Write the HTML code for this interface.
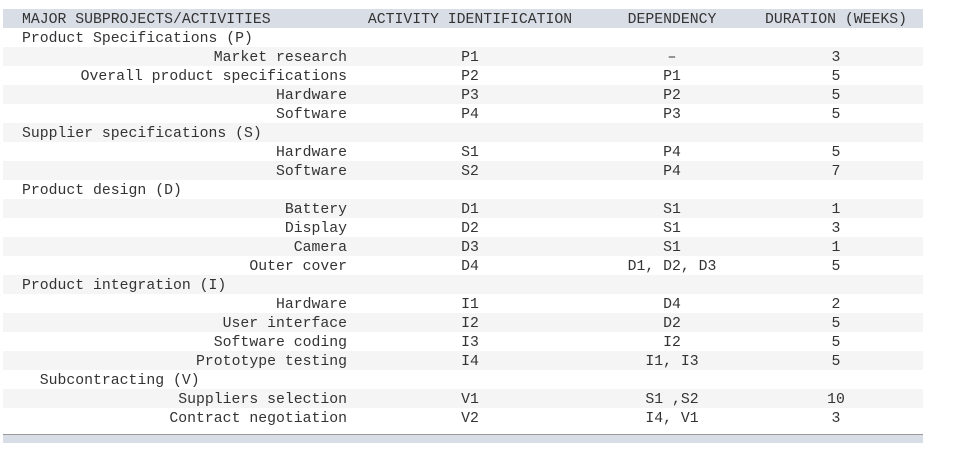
<!DOCTYPE html>
<html><head><style>
body{margin:0;background:#fff;font-family:"Liberation Mono",monospace;font-size:14.8px;color:#333;}
.t{position:absolute;left:3px;top:9px;width:920px;}
.r{display:flex;height:19px;line-height:19px;white-space:pre;box-sizing:border-box;padding-top:2px;}
.r:nth-child(odd){background:#f5f5f5}
.r.h{background:#d9dde6;color:#333}
.c1{width:344px;padding-right:10px;text-align:right}
.c1.l{text-align:left;padding-left:19px;width:335px;padding-right:0}
.c2{width:226px;text-align:center}
.c3{width:178px;text-align:center}
.c4{width:150px;text-align:center}
.bot{position:absolute;left:3px;top:434px;width:920px;height:9px;background:#d9dde6;border-top:1px solid #999;box-sizing:border-box}
</style></head><body>
<div class="t">
<div class="r h"><div class="c1 l">MAJOR SUBPROJECTS/ACTIVITIES</div><div class="c2">ACTIVITY IDENTIFICATION</div><div class="c3">DEPENDENCY</div><div class="c4">DURATION (WEEKS)</div></div>
<div class="r"><div class="c1 l">Product Specifications (P)</div></div>
<div class="r"><div class="c1">Market research</div><div class="c2">P1</div><div class="c3">–</div><div class="c4">3</div></div>
<div class="r"><div class="c1">Overall product specifications</div><div class="c2">P2</div><div class="c3">P1</div><div class="c4">5</div></div>
<div class="r"><div class="c1">Hardware</div><div class="c2">P3</div><div class="c3">P2</div><div class="c4">5</div></div>
<div class="r"><div class="c1">Software</div><div class="c2">P4</div><div class="c3">P3</div><div class="c4">5</div></div>
<div class="r"><div class="c1 l">Supplier specifications (S)</div></div>
<div class="r"><div class="c1">Hardware</div><div class="c2">S1</div><div class="c3">P4</div><div class="c4">5</div></div>
<div class="r"><div class="c1">Software</div><div class="c2">S2</div><div class="c3">P4</div><div class="c4">7</div></div>
<div class="r"><div class="c1 l">Product design (D)</div></div>
<div class="r"><div class="c1">Battery</div><div class="c2">D1</div><div class="c3">S1</div><div class="c4">1</div></div>
<div class="r"><div class="c1">Display</div><div class="c2">D2</div><div class="c3">S1</div><div class="c4">3</div></div>
<div class="r"><div class="c1">Camera</div><div class="c2">D3</div><div class="c3">S1</div><div class="c4">1</div></div>
<div class="r"><div class="c1">Outer cover</div><div class="c2">D4</div><div class="c3">D1, D2, D3</div><div class="c4">5</div></div>
<div class="r"><div class="c1 l">Product integration (I)</div></div>
<div class="r"><div class="c1">Hardware</div><div class="c2">I1</div><div class="c3">D4</div><div class="c4">2</div></div>
<div class="r"><div class="c1">User interface</div><div class="c2">I2</div><div class="c3">D2</div><div class="c4">5</div></div>
<div class="r"><div class="c1">Software coding</div><div class="c2">I3</div><div class="c3">I2</div><div class="c4">5</div></div>
<div class="r"><div class="c1">Prototype testing</div><div class="c2">I4</div><div class="c3">I1, I3</div><div class="c4">5</div></div>
<div class="r"><div class="c1 l">  Subcontracting (V)</div></div>
<div class="r"><div class="c1">Suppliers selection</div><div class="c2">V1</div><div class="c3">S1 ,S2</div><div class="c4">10</div></div>
<div class="r"><div class="c1">Contract negotiation</div><div class="c2">V2</div><div class="c3">I4, V1</div><div class="c4">3</div></div>
</div>
<div class="bot"></div>
</body></html>
